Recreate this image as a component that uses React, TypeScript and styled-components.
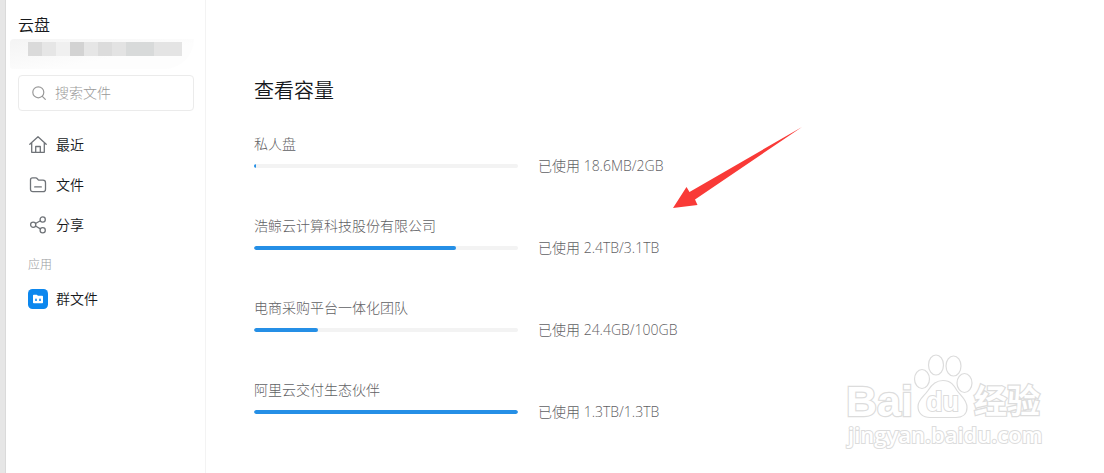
import React from "react";
import styled, { createGlobalStyle } from "styled-components";

const GlobalStyle = createGlobalStyle`
  *, *::before, *::after { box-sizing: border-box; }
  body {
    margin: 0;
    background: #fff;
    color: #17191c;
    font: 350 14px/20px "Open Sans", "Noto Sans CJK SC", sans-serif;
  }
`;

const Page = styled.div`
  position: relative;
  display: flex;
  min-height: 100vh;
  border-left: 5px solid #e6e6e6;
  overflow: hidden;
`;

const Sidebar = styled.aside`
  flex: none;
  width: 201px;
  padding: 15px 11px 0 12px;
  border-left: 1px solid #dadada;
  border-right: 1px solid #f3f3f3;
`;

const Brand = styled.h1`
  margin: 0;
  font-size: 16px;
  line-height: 20px;
  font-weight: 350;
`;

const Account = styled.div`
  display: flex;
  align-items: flex-start;
  height: 30px;
  margin: 4px 0 6px -8px;
  padding: 3px 0 0 18px;
  border-radius: 16px 0 120px 12px;
  background: linear-gradient(170deg, #f4f4f4, #fdfdfd 60%);
`;

const Tile = styled.span<{ $tone: string }>`
  width: 14px;
  height: 14px;
  background: ${(p) => p.$tone};
`;

const SearchBox = styled.label`
  display: flex;
  align-items: center;
  gap: 8px;
  height: 36px;
  padding: 0 12px;
  border: 1px solid #ebebeb;
  border-radius: 4px;
  color: #999;
`;

const SearchInput = styled.input`
  flex: 1;
  min-width: 0;
  padding: 0;
  border: 0;
  outline: 0;
  background: transparent;
  color: #333;
  font: inherit;
  font-weight: 300;
  &::placeholder { color: #999; opacity: 1; }
`;

const Nav = styled.nav`
  display: flex;
  flex-direction: column;
  padding: 14px 0 0 10px;
`;

const NavLink = styled.a`
  display: flex;
  align-items: center;
  gap: 8px;
  height: 40px;
  color: inherit;
  text-decoration: none;
`;

const NavTitle = styled.h2`
  margin: 0;
  padding: 10px 0 4px;
  color: #999b9e;
  font-size: 12px;
  line-height: 20px;
  font-weight: 300;
`;

const Main = styled.main`
  position: relative;
  flex: 1;
  min-width: 0;
  padding: 76px 48px 0;
`;

const Title = styled.h2`
  margin: 0 0 28px;
  font-size: 20px;
  line-height: 30px;
  font-weight: 350;
`;

const DriveList = styled.ul`
  display: flex;
  flex-direction: column;
  gap: 40px;
  margin: 0;
  padding: 0;
  list-style: none;
  color: #5f6164;
  font-weight: 300;
`;

const Drive = styled.li`
  display: flex;
  align-items: flex-end;
  gap: 20px;
  height: 42px;
`;

const Meter = styled.div`
  width: 264px;
  padding-bottom: 8px;
`;

const Name = styled.div`
  margin-bottom: 10px;
`;

const Track = styled.div`
  height: 4px;
  border-radius: 2px;
  background: #f3f3f3;
  overflow: hidden;
`;

const Fill = styled.div`
  height: 100%;
  border-radius: 2px;
  background: #258fe6;
`;

const ArrowMark = styled.svg`
  position: absolute;
  left: 464px;
  top: 124px;
  width: 136px;
  height: 88px;
  pointer-events: none;
`;

const Watermark = styled.svg`
  position: absolute;
  right: 52px;
  bottom: 20px;
  width: 208px;
  height: 103px;
  pointer-events: none;
`;

const HomeIcon = () => (
  <svg width="20" height="20" viewBox="0 0 20 20" fill="none" stroke="#6f7378" strokeWidth="1.3" strokeLinejoin="round" strokeLinecap="round" aria-hidden="true">
    <path d="M1.8 9.2 10 1.8l8.200 7.400M3.700 8v9.300h12.600V8M7.700 17.300v-5.800h4.600v5.800" />
  </svg>
);

const FolderIcon = () => (
  <svg width="20" height="20" viewBox="0 0 20 20" fill="none" stroke="#6f7378" strokeWidth="1.3" strokeLinejoin="round" strokeLinecap="round" aria-hidden="true">
    <path d="M4.500 2.900h3.300q.8 0 1.300.6l1.100 1.200q.5.500 1.200.500h3.600q2.500 0 2.500 2.500v6.500q0 2.500-2.500 2.500H5q-2.500 0-2.500-2.500V4.900q0-2 2-2ZM6.700 11.900h6.600" />
  </svg>
);

const ShareIcon = () => (
  <svg width="20" height="20" viewBox="0 0 20 20" fill="none" stroke="#6f7378" strokeWidth="1.300" aria-hidden="true">
    <circle cx="5.200" cy="9.700" r="2.600" />
    <circle cx="14.700" cy="4.500" r="2.600" />
    <circle cx="14.700" cy="15.200" r="2.600" />
    <path d="m7.500 8.500 4.900-2.800M7.500 11l4.900 2.900" />
  </svg>
);

const GroupIcon = () => (
  <svg width="20" height="20" viewBox="0 0 20 20" aria-hidden="true">
    <rect width="20" height="20" rx="4.500" fill="#0c87ee" />
    <path d="M5 6.500q0-.8.800-.8h2.900l1.300 1.100h4.200q.8 0 .8.800v5.800q0 .8-.8.800H5.800q-.8 0-.8-.8Z" fill="#fff" />
    <path d="M7.200 12v-1.600a.8.800 0 0 1 1.600 0v1.600ZM11.200 12v-1.600a.8.800 0 0 1 1.600 0v1.600Z" fill="#0c87ee" />
  </svg>
);

const SearchIcon = () => (
  <svg width="16" height="16" viewBox="0 0 16 16" fill="none" stroke="#999" strokeWidth="1.200" strokeLinecap="round" aria-hidden="true">
    <circle cx="7.300" cy="7.300" r="5.500" />
    <path d="m11.300 11.300 3 3" />
  </svg>
);

const tiles = ["#dadada", "#e6e6e6", "#f0f0f0", "#d3d3d3", "#e6e6e6", "#dcdcdc", "#e3e3e3", "#d8dada", "#d8dada", "#e4e4e4", "#e4e4e4"];

const links = [
  { label: "最近", Icon: HomeIcon },
  { label: "文件", Icon: FolderIcon },
  { label: "分享", Icon: ShareIcon },
];

const drives = [
  { name: "私人盘", usage: "18.6MB/2GB", percent: 0.9 },
  { name: "浩鲸云计算科技股份有限公司", usage: "2.4TB/3.1TB", percent: 76.6 },
  { name: "电商采购平台一体化团队", usage: "24.4GB/100GB", percent: 24.4 },
  { name: "阿里云交付生态伙伴", usage: "1.3TB/1.3TB", percent: 100 },
];

export default function App() {
  return (
    <Page>
      <GlobalStyle />
      <Sidebar>
        <Brand>云盘</Brand>
        <Account>
          {tiles.map((tone, i) => <Tile key={i} $tone={tone} />)}
        </Account>
        <SearchBox>
          <SearchIcon />
          <SearchInput type="text" placeholder="搜索文件" aria-label="搜索文件" />
        </SearchBox>
        <Nav>
          {links.map(({ label, Icon }) => (
            <NavLink href="#" key={label}><Icon />{label}</NavLink>
          ))}
          <NavTitle>应用</NavTitle>
          <NavLink href="#"><GroupIcon />群文件</NavLink>
        </Nav>
      </Sidebar>
      <Main>
        <Title>查看容量</Title>
        <DriveList>
          {drives.map((d) => (
            <Drive key={d.name}>
              <Meter>
                <Name>{d.name}</Name>
                <Track><Fill style={{ width: `${d.percent}%` }} /></Track>
              </Meter>
              <span>已使用 {d.usage}</span>
            </Drive>
          ))}
        </DriveList>
        <ArrowMark viewBox="670 124 136 88" aria-hidden="true">
          <path d="M673 208 686.500 187 689.500 192 802 127 695 199.500 697.500 205Z" fill="#f93a37" />
        </ArrowMark>
      </Main>
      <Watermark viewBox="844 350 208 103" fill="#fff" stroke="#dcdcdc" strokeWidth="1.200" aria-hidden="true">
        <g fontWeight="700" paintOrder="stroke" strokeWidth="2.400">
          <text x="846" y="416" fontSize="43" fontFamily="Liberation Sans, sans-serif">Bai</text>
          <text x="974" y="413" fontSize="33" fontFamily="Noto Sans CJK SC, sans-serif">经验</text>
        </g>
        <ellipse cx="922" cy="379" rx="7.500" ry="9.500" />
        <ellipse cx="936" cy="365" rx="7.500" ry="10" />
        <ellipse cx="953.500" cy="366" rx="7.500" ry="10" />
        <ellipse cx="964.500" cy="383" rx="7.500" ry="9.500" />
        <path d="M943 380.500c8 0 11 5 14 10 4 6 10 9 10 17 0 7-5 10-11 10H930c-7 0-12-4-12-11 0-7 6-10 10-16 3-5 7-10 15-10Z" />
        <text x="926" y="411" fontSize="27" fontFamily="Liberation Sans, sans-serif" fontWeight="700" paintOrder="stroke" strokeWidth="2">du</text>
        <text x="848" y="443" fontSize="22" fontFamily="Open Sans, sans-serif" fontWeight="600" paintOrder="stroke" strokeWidth="2">jingyan.baidu.com</text>
      </Watermark>
    </Page>
  );
}
